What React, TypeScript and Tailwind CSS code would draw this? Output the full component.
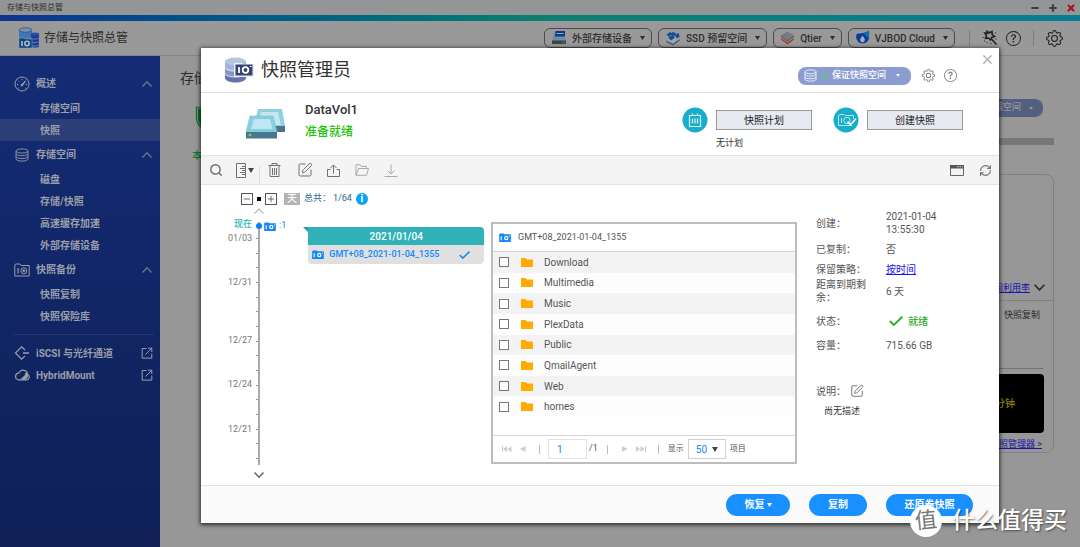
import React, { useState } from "react";
import { Minus, Plus, RefreshCw, Search, SquarePen, X } from "lucide-react";
import { BsGear, BsQuestionCircle } from "react-icons/bs";

type IconProps = { className?: string };

type NavGroup = {
  title: string;
  icon: React.ReactNode;
  items: string[];
};

const Caret = ({ className = "" }: IconProps) => (
  <svg viewBox="0 0 10 8" className={className} fill="currentColor">
    <path d="M0 0h10L5 8z" />
  </svg>
);

const ArrowUp = ({ className = "" }: IconProps) => (
  <svg viewBox="0 0 10 6" className={className} fill="none" stroke="currentColor" strokeWidth="1.2">
    <path d="M.5 5.500 5 .8l4.500 4.700" />
  </svg>
);

const ArrowDown = ({ className = "" }: IconProps) => (
  <svg viewBox="0 0 10 6" className={className} fill="none" stroke="currentColor" strokeWidth="1.5">
    <path d="M.5.500 5 5.200 9.500.500" />
  </svg>
);

const GaugeIcon = () => (
  <svg viewBox="0 0 16 16" className="h-4 w-4" fill="none" stroke="currentColor">
    <circle cx="8" cy="8" r="7" />
    <circle cx="8" cy="9" r="1.3" fill="currentColor" stroke="none" />
    <path d="M8.5 8.5 11.5 5" strokeWidth="1.3" />
    <path d="M3 8.5h1.2M4.4 4.8l.8.8M8 3v1.2M11.8 8.5H13M5 11.8l-.7.5M11 11.8l.7.5" />
  </svg>
);

const DisksIcon = ({ className = "" }: IconProps) => (
  <svg viewBox="0 0 16 16" className={className} fill="none" stroke="currentColor">
    <ellipse cx="8" cy="3.4" rx="6.8" ry="2.4" />
    <path d="M1.2 3.4v3c0 1.2 2.9 2.4 6.8 2.4s6.8-1.200 6.800-2.400v-3" />
    <path d="M1.2 6.4v3.2c0 1.2 2.9 2.4 6.8 2.4s6.8-1.200 6.800-2.400V6.4" />
    <path d="M1.2 9.6v3c0 1.2 2.9 2.4 6.8 2.4s6.8-1.200 6.800-2.400v-3" />
  </svg>
);

const BackupIcon = () => (
  <svg viewBox="0 0 16 14" className="h-[14px] w-4" fill="none" stroke="currentColor">
    <path d="M.8 2.5V13h14.4V2.5H7L6 1H1.5z" />
    <path d="M4 5v5.5" strokeWidth="1.2" />
    <circle cx="9.8" cy="7.8" r="3" />
    <circle cx="9.8" cy="7.8" r="1" fill="currentColor" />
  </svg>
);

const IscsiIcon = () => (
  <svg viewBox="0 0 16 16" className="h-4 w-4" fill="none" stroke="currentColor" strokeWidth="1.3">
    <path d="M11 5 7.5 1.8 1.5 8l6 6.2L11 11M9 8h6" />
  </svg>
);

const HybridIcon = () => (
  <svg viewBox="0 0 16 16" className="h-4 w-4" fill="none" stroke="currentColor" strokeWidth="1.2">
    <path d="M4 12.8h8.5a2.8 2.8 0 0 0 1.2-5.3A4.6 4.6 0 0 0 5 5.8a3.6 3.6 0 0 0-1 7z" />
    <path d="M6 12.8 11 8V6h3v4l-2.500 2.800z" fill="currentColor" stroke="none" />
  </svg>
);

const OpenIcon = () => (
  <svg viewBox="0 0 12 12" className="h-3 w-3" fill="none" stroke="currentColor">
    <path d="M5.5 1.5H1.2v9.6h9.6V6.5M4.5 7.5 10.6 1.4M7 1.2h3.8V5" />
  </svg>
);

const CameraIcon = ({ className = "" }: IconProps) => (
  <svg viewBox="0 0 13 10" className={className}>
    <path d="M0 1.5 1 .5h4l.8 1H13V10H0z" fill="#1488f8" />
    <path d="M2.3 3.5v4.6" stroke="#fff" strokeWidth="1.2" />
    <circle cx="7.9" cy="5.6" r="1.8" fill="none" stroke="#fff" strokeWidth="1.3" />
    <path d="M11 3.2h1" stroke="#fff" />
  </svg>
);

const AppIcon = () => (
  <svg viewBox="0 0 22 22" className="h-[22px] w-[22px]">
    <path d="M1 3v7c0 1 3 2 6.500 2s6.500-1 6.500-2V3z" fill="#4476ad" />
    <ellipse cx="7.500" cy="3" rx="6.500" ry="2.200" fill="#7b93ab" stroke="#1f4aa0" strokeWidth=".7" />
    <path d="M13 7v12c0 1 2 1.500 4.500 1.500S21 20 21 19V7z" fill="#1c3b93" />
    <ellipse cx="17" cy="7" rx="4.300" ry="1.600" fill="#2450ac" />
    <path d="M13 11c2 1.500 6 1.500 8 0M13 14.500c2 1.500 6 1.500 8 0M13 18c2 1.500 6 1.500 8 0" fill="none" stroke="#738cc0" strokeWidth=".8" />
    <path d="M1 11h5l1 1h7v9H1z" fill="#0b4385" stroke="#91a7bd" strokeWidth=".5" />
    <path d="M4 14v5" stroke="#bbb" strokeWidth="1.600" />
    <circle cx="9" cy="16.500" r="2.200" fill="none" stroke="#bbb" strokeWidth="1.600" />
  </svg>
);

const ManagerIcon = () => (
  <svg viewBox="0 0 31 26" className="h-[26px] w-[31px]">
    <path d="M1 4v17c0 2.500 4.800 4.500 10.500 4.500S22 23.500 22 21V4z" fill="#6673ad" />
    <path d="M1 4v12c0 2.500 4.800 4 10.500 4S22 18.500 22 16V4z" fill="#8795c5" />
    <path d="M1 4v6c0 2.500 4.800 4 10.500 4S22 12.500 22 10V4z" fill="#a2b4d8" />
    <path d="M1 10c0 2.500 4.800 4 10.500 4S22 12.500 22 10M1 16c0 2.500 4.800 4 10.500 4S22 18.500 22 16" fill="none" stroke="#fff" strokeWidth=".8" />
    <ellipse cx="11.500" cy="4.500" rx="10.500" ry="4" fill="#b4c6e2" />
    <path d="M10 6h8l1 1h11v13H10z" fill="#eceef3" />
    <path d="M11.500 7.500h17v11h-17z" fill="#35456f" />
    <path d="M15 10v6" stroke="#fff" strokeWidth="1.800" />
    <circle cx="21.500" cy="13" r="2.800" fill="none" stroke="#fff" strokeWidth="1.800" />
    <path d="M26 9.500h1.500" stroke="#fff" />
  </svg>
);

const VolumeIcon = () => (
  <svg viewBox="0 0 40 31" className="h-[31px] w-10">
    <path d="M12 1h24l3 17v6H8V18z" fill="#8dd0df" />
    <path d="M15 4h17l3 13H12z" fill="#c3e6f1" />
    <path d="M28 18h11v6H28z" fill="#47768d" />
    <path d="M4 8h23l4 16H0z" fill="#86cfdf" stroke="#74bdcf" strokeWidth=".5" />
    <path d="M8 11h16l2.500 10H5z" fill="#bfe6f2" />
    <path d="M0 24h31v6.500H0z" fill="#47768d" />
    <circle cx="4" cy="27" r="1.400" fill="#97d700" />
  </svg>
);

const ExternalDiskIcon = () => (
  <svg viewBox="0 0 16 14" className="h-[14px] w-4">
    <path d="M3 2h10l2 8H1z" fill="#768ca3" />
    <path d="M4.500 0H14v5.500H4z" fill="#0c3b85" />
    <path d="M5.500 2.500h7" stroke="#9ab" />
    <path d="M1 9.500h14V13H1z" fill="#3b434b" />
    <path d="M11 11.500h3" stroke="#358b50" />
  </svg>
);

const SsdIcon = () => (
  <svg viewBox="0 0 16 16" className="h-[15px] w-4">
    <path d="m1 10 7 3.500 7-5-5-2z" fill="#9ba7ae" />
    <path d="M1 10v2l7 3.500 7-5v-2l-7 5z" fill="#4e5c68" />
    <path d="m1 4 4-3 2 2-3 3zM7 1l4 1-1 3-4-1zM10 4l4-2 1 4-3 2zM3 7l5-3 2 3-4 3z" fill="#104c96" />
  </svg>
);

const QtierIcon = () => (
  <svg viewBox="0 0 16 15" className="h-[14px] w-[15px]">
    <path d="m1 9.500 7 5 7-5v-2l-7 4-7-4z" fill="#9d4435" />
    <path d="m1 7 7 5 7-5-7-2z" fill="#b2aaa7" />
    <path d="m1 4.500 7 5 7-5V6.500l-7 5-7-5z" fill="#5b5f63" />
    <path d="m1 4.500 7-4 7 4-7 4.500z" fill="#777b7e" />
  </svg>
);

const VjbodIcon = () => (
  <svg viewBox="0 0 16 16" className="h-[15px] w-[15px]">
    <path d="M2 3 9 2l6-2v8a7 7 0 1 1-13-5z" fill="#073c9b" />
    <path d="M9 2 15 0v8c-2-1-3-3-6-6z" fill="#156fae" />
    <path d="M8 5c2 2 2.500 3.300 2.500 4.500a2.500 2.500 0 1 1-5 0C5.500 8 6.500 6.800 8 5z" fill="#a4adb9" />
  </svg>
);

const WandIcon = () => (
  <svg viewBox="0 0 16 16" className="h-4 w-4" fill="none" stroke="currentColor" strokeWidth="1.600">
    <path d="m5 1.500 2.500 1.300L10 1.500l.2 3 2.300 2-2.800 1L8.500 10 6.500 8l-3 .3 1-2.800L2.800 3l2.700.1zM9.500 9l5 5.500" />
    <path d="M1 7v1M2 11h1M5 12v1M13 3h1M13.500 9h1M9 13v1" strokeWidth="1" />
  </svg>
);

const ShieldIcon = () => (
  <svg viewBox="0 0 30 34" className="h-[34px] w-[30px]">
    <path d="M1 2c5 1 9 0 14-2 5 2 9 3 14 2v14c0 8-6 14-14 18C7 30 1 24 1 16z" fill="#0a6e2a" />
    <path d="M3 4c4 .5 8-.3 12-2v30C8 28 3 23 3 16z" fill="none" stroke="#8a9c8d" strokeWidth="1.200" />
  </svg>
);

const CalendarIcon = () => (
  <svg viewBox="0 0 26 26" className="h-[26px] w-[26px]">
    <circle cx="13" cy="13" r="12.500" fill="#18aecb" />
    <path d="M7.500 8.500h11v11h-11zM10.500 6.500v2M15.500 6.500v2M10.500 11.500v5M13 11.500v5M15.500 11.500v5" fill="none" stroke="#d6f3f8" strokeWidth="1.200" />
  </svg>
);

const TakeSnapshotIcon = () => (
  <svg viewBox="0 0 26 26" className="h-[26px] w-[26px]">
    <circle cx="13" cy="13" r="12.500" fill="#18aecb" />
    <path d="M19 18.500H5.500V8.500L7 7.500h4l1 1h8.500V12M8.500 11v5" fill="none" stroke="#b9ebf4" />
    <circle cx="14" cy="13.500" r="3.200" fill="none" stroke="#b9ebf4" />
    <path d="m14.500 14.500 3 3.200 5.500-6" fill="none" stroke="#fff" strokeWidth="1.500" />
  </svg>
);

const RulerIcon = () => (
  <svg viewBox="0 0 10 15" className="h-[15px] w-[10px]" fill="none" stroke="currentColor">
    <path d="M.5.500h9v14h-9zM6 3.500h3.500M4 5.500h5.500M6 7.500h3.500M4 9.500h5.500M6 11.500h3.500" />
  </svg>
);

const TrashIcon = () => (
  <svg viewBox="0 0 13 14" className="h-[14px] w-[13px]" fill="none" stroke="currentColor">
    <path d="M.5 2.500h12M4 2.500v-2h5v2M2 3v10.500h9V3M4.500 5v7M6.500 5v7M8.500 5v7" />
  </svg>
);

const ShareIcon = () => (
  <svg viewBox="0 0 13 13" className="h-[13px] w-[13px]" fill="none" stroke="currentColor">
    <path d="M3.500 5.500h-3v7h12v-7h-3M6.500 9.500V1M3.500 4l3-3 3 3" />
  </svg>
);

const FolderOpenIcon = () => (
  <svg viewBox="0 0 14 12" className="h-3 w-[14px]" fill="none" stroke="currentColor">
    <path d="M1 11.300V.8h4l1 1.500h5.500v2M1 11.300 3.500 4.500h10l-2 6.800z" />
  </svg>
);

const DownloadIcon = () => (
  <svg viewBox="0 0 14 13" className="h-[13px] w-[14px]" fill="none" stroke="currentColor">
    <path d="M7 .5v9M3.500 6.500 7 10l3.500-3.500M.5 12.500h13" />
  </svg>
);

const WindowIcon = () => (
  <svg viewBox="0 0 14 11" className="h-[11px] w-[14px]">
    <path d="M.5.500h13v10H.5z" fill="none" stroke="#666" />
    <path d="M0 0h14v3.500H0z" fill="#555" />
    <path d="M7 1.700h1.500M9.500 1.700H11M12 1.700h1" stroke="#ddd" />
  </svg>
);

const FolderIcon = () => (
  <svg viewBox="0 0 12 9" className="h-[9px] w-3">
    <path d="M0 0h4.500l1.500 1.500h6V9H0z" fill="#ffab00" />
  </svg>
);

const CheckIcon = ({ className = "" }: IconProps) => (
  <svg viewBox="0 0 14 10" className={className} fill="none" stroke="currentColor" strokeWidth="1.900">
    <path d="m.8 5 4 4 8.500-8.300" />
  </svg>
);

const navGroups: NavGroup[] = [
  { title: "概述", icon: <GaugeIcon />, items: ["存储空间", "快照"] },
  {
    title: "存储空间",
    icon: <DisksIcon className="h-[14px] w-4" />,
    items: ["磁盘", "存储/快照", "高速缓存加速", "外部存储设备"],
  },
  { title: "快照备份", icon: <BackupIcon />, items: ["快照复制", "快照保险库"] },
];

const topMenus = [
  { label: "外部存储设备", icon: <ExternalDiskIcon /> },
  { label: "SSD 预留空间", icon: <SsdIcon /> },
  { label: "Qtier", icon: <QtierIcon /> },
  { label: "VJBOD Cloud", icon: <VjbodIcon /> },
];

const timeline = [
  "01/03", "", "", "12/31", "", "", "", "12/27",
  "", "", "12/24", "", "", "12/21", "", "",
];

const folders = [
  "Download",
  "Multimedia",
  "Music",
  "PlexData",
  "Public",
  "QmailAgent",
  "Web",
  "homes",
];

const TopBar = () => (
  <header>
    <div className="flex h-[15px] items-center justify-between bg-[#949597] pl-[7px] pr-1 text-[8px] text-[#2b2b2b]">
      <span>存储与快照总管</span>
      <div className="flex items-center gap-2">
        <button aria-label="最小化" className="text-[#3b3e43]">
          <Minus className="h-[10px] w-[10px]" strokeWidth={5} />
        </button>
        <button aria-label="最大化" className="text-[#3b3e43]">
          <Plus className="h-[10px] w-[10px]" strokeWidth={5} />
        </button>
        <button aria-label="关闭" className="text-[#a01622]">
          <X className="h-[10px] w-[10px]" strokeWidth={5} />
        </button>
      </div>
    </div>
    <div className="h-[6px] bg-linear-to-r from-[#0f3291] via-[#0c7f70] to-[#047f95]" />
    <div className="flex h-[35px] items-center border-b border-[#858585] bg-[#999] pl-[18px] pr-[17px]">
      <AppIcon />
      <h1 className="ml-1 text-[12px] text-[#2b2b2b]">存储与快照总管</h1>
      <div className="ml-auto flex items-center gap-[6px] text-[10px] font-medium text-[#2d2d2d]">
        {topMenus.map((menu) => (
          <button
            key={menu.label}
            className="flex h-5 items-center gap-[5px] rounded-md border border-[#4b4b4b] px-[6px]"
          >
            {menu.icon}
            <span>{menu.label}</span>
            <Caret className="ml-[3px] h-1 w-[5px]" />
          </button>
        ))}
      </div>
      <div className="ml-[14px] flex items-center text-[#222]">
        <span className="h-4 w-px bg-[#7c7c70]" />
        <button aria-label="工具" className="ml-3">
          <WandIcon />
        </button>
        <button aria-label="帮助" className="ml-2">
          <BsQuestionCircle className="h-[15px] w-[15px]" />
        </button>
        <span className="ml-3 h-4 w-px bg-[#7c7c70]" />
        <button aria-label="设置" className="ml-3">
          <BsGear className="h-[17px] w-[17px]" />
        </button>
      </div>
    </div>
  </header>
);

const Sidebar = () => (
  <nav className="w-[160px] shrink-0 bg-linear-to-b from-[#142c75] to-[#0f2057] pt-[14px] text-[10px] font-bold text-[#999ea9]">
    {navGroups.map((group, index) => (
      <div key={group.title}>
        <button className="flex h-[27px] w-full items-center pl-[14px] pr-2">
          {group.icon}
          <span className="ml-[6px]">{group.title}</span>
          <ArrowUp className="ml-auto h-[6px] w-[10px] opacity-70" />
        </button>
        {group.items.map((item) => (
          <a
            key={item}
            href="#"
            className={
              index === 0 && item === "快照"
                ? "flex h-[22px] items-center bg-[#2b3e77] pl-10"
                : "flex h-[22px] items-center pl-10"
            }
          >
            {item}
          </a>
        ))}
      </div>
    ))}
    <div className="my-[7px] ml-[13px] mr-[6px] h-px bg-[#263767]" />
    <a href="#" className="flex h-[22px] items-center pl-[14px] pr-[7px]">
      <IscsiIcon />
      <span className="ml-[6px] mr-auto">iSCSI 与光纤通道</span>
      <OpenIcon />
    </a>
    <a href="#" className="flex h-[22px] items-center pl-[14px] pr-[7px]">
      <HybridIcon />
      <span className="ml-[6px] mr-auto">HybridMount</span>
      <OpenIcon />
    </a>
  </nav>
);

const Overview = () => (
  <main className="flex min-w-0 flex-1 flex-col bg-[#979797] pl-5 pr-[26px] text-[9px] text-[#2b2b2b]">
    <h2 className="mt-3 text-[14px] leading-5">存储</h2>
    <div className="mt-[11px] flex h-[65px] justify-between">
      <div className="flex w-[54px] flex-col items-center pt-[6px] text-[#0a7d2a]">
        <ShieldIcon />
        <span className="mt-4 self-start pl-3 text-[10px] font-medium leading-4">本</span>
      </div>
      <div className="flex flex-col items-end">
        <button className="mr-[11px] flex h-[18px] items-center rounded-lg bg-[#535e80] px-[10px] font-medium text-[#999]">
          保证快照空间
          <Caret className="ml-2 h-[3px] w-1" />
        </button>
        <div className="mt-[21px] h-[7px] w-[120px] bg-[#777]" />
      </div>
    </div>
    <section className="ml-10 mt-[10px] flex h-[279px] flex-col items-end rounded-lg border border-[#818181]">
      <div className="flex h-[126px] w-full items-end justify-end gap-1 border-b border-[#818181] pb-1 pr-2">
        <a href="#" className="leading-4 text-[#1a15ad] underline">
          空间利用率
        </a>
        <ArrowDown className="mb-[5px] h-[7px] w-[11px]" />
      </div>
      <div className="mr-[10px] flex h-[68px] w-[200px] justify-end border-b border-[#737373] pr-[3px] pt-[7px] leading-[14px]">
        快照复制
      </div>
      <div className="mr-[9px] mt-[5px] flex h-[59px] w-[140px] items-center justify-end rounded bg-black pr-[29px] text-[10px] font-medium text-[#87850a]">
        分钟
      </div>
      <a href="#" className="mr-[11px] mt-1 leading-[14px] text-[#1a15ad] underline">
        快照管理器 &gt;
      </a>
    </section>
  </main>
);

const VolumeSummary = () => (
  <section className="flex h-[62px] items-start pl-[45px] pr-9">
    <div className="pt-[15px]">
      <VolumeIcon />
    </div>
    <div className="ml-[19px] pt-[9px]">
      <h3 className="text-[13px] font-medium leading-4 text-[#333]">DataVol1</h3>
      <p className="mt-[6px] text-[12px] font-medium leading-4 text-[#1fc40c]">准备就绪</p>
    </div>
    <div className="ml-auto flex gap-[21px] pt-[14px]">
      <div className="flex items-start gap-2">
        <CalendarIcon />
        <div>
          <button className="mt-[3px] block h-5 w-24 border border-[#999] bg-[#e6e9f0] text-[10px] leading-[19px] text-[#222]">
            快照计划
          </button>
          <p className="mt-[7px] text-[9px] leading-3 text-[#333]">无计划</p>
        </div>
      </div>
      <div className="flex items-start gap-2">
        <TakeSnapshotIcon />
        <button className="mt-[3px] block h-5 w-24 border border-[#999] bg-[#e6e9f0] text-[10px] leading-[19px] text-[#222]">
          创建快照
        </button>
      </div>
    </div>
  </section>
);

const Toolbar = () => (
  <div className="flex h-[30px] items-center border-y border-[#e3e3e3] bg-[#f4f4f4] pl-2 pr-[7px] text-[#707070]">
    <button aria-label="搜索">
      <Search className="h-[14px] w-[14px]" strokeWidth={2.5} />
    </button>
    <button aria-label="刻度" className="ml-[13px] flex items-center gap-[2px]">
      <RulerIcon />
      <Caret className="h-[5px] w-[6px] text-[#444]" />
    </button>
    <span className="ml-[5px] h-[18px] w-px self-end bg-[#ddd]" />
    <button aria-label="删除" className="ml-2">
      <TrashIcon />
    </button>
    <button aria-label="编辑" className="ml-4">
      <SquarePen className="h-4 w-4" strokeWidth={1.5} />
    </button>
    <button aria-label="共享" className="ml-[14px]">
      <ShareIcon />
    </button>
    <button aria-label="打开" className="ml-[15px] text-[#aaa]">
      <FolderOpenIcon />
    </button>
    <button aria-label="下载" className="ml-[15px] text-[#aaa]">
      <DownloadIcon />
    </button>
    <button aria-label="窗口" className="ml-auto">
      <WindowIcon />
    </button>
    <button aria-label="刷新" className="ml-[15px]">
      <RefreshCw className="h-[13px] w-[13px]" strokeWidth={2} />
    </button>
  </div>
);

const Timeline = () => (
  <div className="w-[290px] shrink-0 pl-5 text-[9px]">
    <div className="flex h-[21px] items-center pl-5 pt-[6px] text-[#2f6690]">
      <button aria-label="缩小" className="flex h-3 w-3 items-center justify-center border border-[#555] text-[#555]">
        <Minus className="h-[10px] w-[10px]" />
      </button>
      <span className="ml-1 h-1 w-1 bg-black" />
      <button aria-label="放大" className="ml-1 flex h-3 w-3 items-center justify-center border border-[#555] text-[#555]">
        <Plus className="h-[10px] w-[10px]" />
      </button>
      <span className="ml-[7px] flex h-3 w-4 items-center justify-center bg-[#b3b3b3] text-[10px] font-medium text-white">
        天
      </span>
      <span className="ml-1">总共：</span>
      <span className="ml-[2px]">1/64</span>
      <span className="ml-1 flex h-3 w-3 items-center justify-center rounded-full bg-[#0aa5fa] text-[10px] font-bold text-white">
        i
      </span>
    </div>
    <div className="flex">
      <div className="w-[37px]">
        <ArrowUp className="-mr-[6px] ml-auto mt-[2px] h-[6px] w-[10px] text-[#bbb]" />
        <div className="mt-[6px] flex h-[10px] items-center justify-end pr-[6px] font-medium text-[#2eb2b2]">
          现在
        </div>
        <div className="flex h-[236px] flex-col pt-px text-[#777]">
          {timeline.map((day, index) => (
            <div key={index} className="flex flex-1 items-center justify-end">
              <span className="mr-1">{day}</span>
              <span className="h-px w-[2px] bg-[#999]" />
            </div>
          ))}
        </div>
        <ArrowDown className="-mr-[6px] ml-auto mt-[6px] h-[6px] w-[10px] text-[#666]" />
      </div>
      <div className="mt-4 h-[243px] w-[2px] bg-[#aaa]">
        <div className="-ml-[2px] mt-[1px] h-[6px] w-[6px] rounded-full bg-[#0b80f5]" />
      </div>
      <div className="ml-1 mt-[13px] flex h-[14px] items-center gap-[3px] text-[#1488f8]">
        <CameraIcon className="h-[9px] w-3" />
        <span>:1</span>
      </div>
      <div className="ml-[17px] mt-[21px] flex items-start">
        <svg viewBox="0 0 5 5" className="h-[5px] w-[5px]">
          <path d="M0 0h5v5z" fill="#229c9f" />
        </svg>
        <article className="w-[176px] overflow-hidden rounded-r font-medium">
          <div className="h-[18px] bg-[#31b2b9] text-center text-[10px] leading-[19px] text-white">2021/01/04</div>
          <button className="flex h-[19px] w-full items-center rounded-b bg-[#e0e0e0] px-1 text-[#1488f8]">
            <CameraIcon className="h-[9px] w-3" />
            <span className="ml-[5px]">GMT+08_2021-01-04_1355</span>
            <CheckIcon className="ml-auto mr-[10px] h-2 w-[11px]" />
          </button>
        </article>
      </div>
    </div>
  </div>
);

const FileBrowser = () => {
  const [selected, setSelected] = useState<string[]>([]);

  const toggle = (name: string) => {
    setSelected((prevState) =>
      prevState.includes(name)
        ? prevState.filter((item) => item !== name)
        : [...prevState, name]
    );
  };

  return (
    <section className="mt-[37px] flex h-[242px] min-w-0 flex-1 flex-col border-2 border-[#bdbdbd] text-[#555]">
      <div className="flex h-[28px] shrink-0 items-center border-b border-[#d5d5d5] pl-[6px] text-[9px]">
        <CameraIcon className="h-[9px] w-3" />
        <h4 className="ml-[7px]">GMT+08_2021-01-04_1355</h4>
      </div>
      <table className="h-[165px] w-full border-collapse text-[10px] leading-3">
        <tbody>
          {folders.map((name) => (
            <tr key={name} className="odd:bg-[#f3f3f3] even:bg-[#fdfdfd]">
              <td className="w-7 pl-[6px]">
                <input
                  id={name}
                  type="checkbox"
                  checked={selected.includes(name)}
                  onChange={() => toggle(name)}
                  className="block h-[10px] w-[10px] appearance-none border border-[#777] bg-white checked:bg-[#1488f8]"
                />
              </td>
              <td className="w-[23px]">
                <FolderIcon />
              </td>
              <td className="pt-px">
                <label htmlFor={name}>{name}</label>
              </td>
            </tr>
          ))}
        </tbody>
      </table>
      <div className="mt-auto flex h-[27px] shrink-0 items-center border-t border-[#d5d5d5] pl-[9px] text-[9px]">
        <button aria-label="第一页" className="text-[#ccc]">
          <svg viewBox="0 0 10 6" className="h-[6px] w-[10px]" fill="currentColor">
            <path d="M0 0h1v6H0zM1 3l4-3v6zM5.500 3l4-3v6z" />
          </svg>
        </button>
        <button aria-label="上一页" className="ml-2 text-[#ccc]">
          <svg viewBox="0 0 6 6" className="h-[6px] w-[6px]" fill="currentColor">
            <path d="M0 3l5.500-3v6z" />
          </svg>
        </button>
        <span className="ml-[13px] h-[9px] w-px bg-[#bbb]" />
        <input
          aria-label="页码"
          defaultValue="1"
          className="ml-2 h-5 w-[39px] border border-[#e2e2e2] pl-2 text-[10px] text-[#1488e8]"
        />
        <span className="ml-[2px]">/1</span>
        <span className="ml-[9px] h-[9px] w-px bg-[#bbb]" />
        <button aria-label="下一页" className="ml-[14px] text-[#ccc]">
          <svg viewBox="0 0 6 6" className="h-[6px] w-[6px]" fill="currentColor">
            <path d="M0 0l5.500 3L0 6z" />
          </svg>
        </button>
        <button aria-label="最后一页" className="ml-2 text-[#ccc]">
          <svg viewBox="0 0 10 6" className="h-[6px] w-[10px]" fill="currentColor">
            <path d="M0 0l4 3-4 3zM4.500 0l4 3-4 3zM9 0h1v6H9z" />
          </svg>
        </button>
        <span className="ml-3 h-[9px] w-px bg-[#bbb]" />
        <label htmlFor="pageSize" className="ml-[9px] text-[8px]">
          显示
        </label>
        <div className="relative ml-1">
          <select
            id="pageSize"
            className="block h-5 w-[38px] appearance-none border border-[#d0d0d0] bg-white pl-[7px] text-[10px] text-[#1488e8]"
          >
            <option>50</option>
          </select>
          <Caret className="pointer-events-none absolute right-2 top-2 h-[5px] w-[6px] text-[#444]" />
        </div>
        <span className="ml-1 text-[8px]">项目</span>
      </div>
    </section>
  );
};

const Details = () => (
  <aside className="w-[202px] shrink-0 pl-[19px] pt-6 text-[10px] leading-[13px] text-[#555]">
    <dl className="[&>div]:flex [&>div]:items-center [&_dt]:w-[70px] [&_dt]:pr-5">
      <div className="h-7">
        <dt>创建：</dt>
        <dd className="w-[60px]">2021-01-04 13:55:30</dd>
      </div>
      <div className="h-6">
        <dt>已复制：</dt>
        <dd>否</dd>
      </div>
      <div className="h-4">
        <dt>保留策略：</dt>
        <dd>
          <a href="#" className="text-[#1a12f0] underline">
            按时间
          </a>
        </dd>
      </div>
      <div className="h-7">
        <dt>距离到期剩余：</dt>
        <dd>6 天</dd>
      </div>
      <div className="h-8">
        <dt>状态：</dt>
        <dd className="flex items-center gap-[5px] pl-[3px] font-medium text-[#2fae2f]">
          <CheckIcon className="h-[10px] w-[14px]" />
          就绪
        </dd>
      </div>
      <div className="h-4">
        <dt>容量：</dt>
        <dd>715.66 GB</dd>
      </div>
    </dl>
    <div className="mt-7 flex h-5 items-center">
      <span className="w-[34px]">说明：</span>
      <button aria-label="编辑说明" className="text-[#666]">
        <SquarePen className="h-[14px] w-[14px]" strokeWidth={1.5} />
      </button>
    </div>
    <p className="mt-[2px] pl-2 text-[9px] leading-4 text-[#333]">尚无描述</p>
  </aside>
);

const SnapshotManager = () => (
  <div
    role="dialog"
    aria-label="快照管理员"
    className="absolute left-[201px] right-[81px] top-12 bg-white shadow-[0_1px_4px_1px_rgba(0,0,0,0.7)]"
  >
    <button aria-label="关闭" className="absolute right-1 top-1 text-[#aaa]">
      <X className="h-[15px] w-[15px]" strokeWidth={2} />
    </button>
    <header className="flex h-[45px] items-center border-b border-[#ddd] pl-[23px] pr-[42px]">
      <ManagerIcon />
      <h2 className="ml-[6px] text-[18px] leading-6 text-[#333]">快照管理员</h2>
      <div className="ml-auto flex items-center pt-[11px] text-[#777]">
        <button className="flex h-[18px] items-center rounded-lg bg-[#8b9cd1] px-[6px] text-[9px] font-medium text-white">
          <DisksIcon className="h-[13px] w-[13px]" />
          <span className="ml-[6px] h-1 w-1 rounded-full bg-[#58d058]" />
          <span className="ml-[5px]">保证快照空间</span>
          <Caret className="ml-[10px] mr-[5px] h-[3px] w-1" />
        </button>
        <button aria-label="设置" className="ml-[11px]">
          <BsGear className="h-[13px] w-[13px]" />
        </button>
        <button aria-label="帮助" className="ml-[9px]">
          <BsQuestionCircle className="h-[13px] w-[13px]" />
        </button>
      </div>
    </header>
    <VolumeSummary />
    <Toolbar />
    <div className="flex h-[300px]">
      <Timeline />
      <FileBrowser />
      <Details />
    </div>
    <footer className="flex h-[38px] items-center justify-end gap-[19px] border-t border-[#e3e3e3] bg-[#fafafa] pr-[26px] text-[10px] font-bold text-white">
      <button className="flex h-[22px] w-16 items-center justify-center gap-[2px] rounded-full bg-[#1890ff]">
        恢复
        <Caret className="h-1 w-[5px]" />
      </button>
      <button className="h-[22px] w-[58px] rounded-full bg-[#1890ff]">复制</button>
      <button className="h-[22px] w-[87px] rounded-full bg-[#1890ff]">还原卷快照</button>
    </footer>
  </div>
);

const Watermark = () => (
  <div className="pointer-events-none absolute bottom-[10px] right-[13px] flex items-center gap-[10px] [text-shadow:1px_1px_2px_rgba(0,0,0,0.5)]">
    <span className="flex h-8 w-8 items-center justify-center rounded-full bg-white text-[22px] leading-8 text-[#777] [text-shadow:none]">
      <span className="-rotate-6">值</span>
    </span>
    <span className="text-[23px] font-medium leading-8 text-white">什么值得买</span>
  </div>
);

const App = () => {
  return (
    <div
      lang="zh-CN"
      className="relative flex min-h-screen flex-col overflow-hidden font-['Roboto','Noto_Sans_CJK_SC',sans-serif]"
    >
      <TopBar />
      <div className="flex flex-1">
        <Sidebar />
        <Overview />
      </div>
      <SnapshotManager />
      <Watermark />
    </div>
  );
};

export default App;
